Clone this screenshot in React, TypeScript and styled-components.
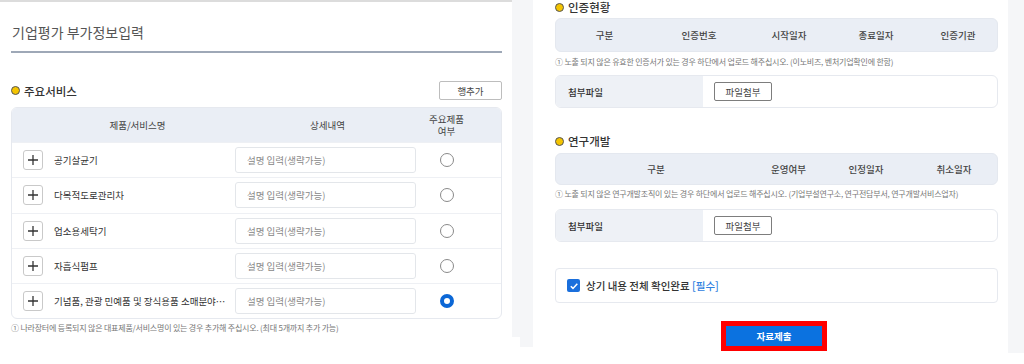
import React from "react";
import styled, { createGlobalStyle } from "styled-components";

const Global = createGlobalStyle`
  html, body { margin: 0; padding: 0; background: #fff; }
  body { font-family: "Noto Sans CJK KR", "Noto Sans", sans-serif; color: #333; }
  * { box-sizing: border-box; }
`;

const Page = styled.div`
  width: 1024px;
  height: 364px;
  display: flex;
  align-items: flex-start;
  background: #fff;
  overflow: hidden;
`;

const LeftShot = styled.div`
  width: 512px;
  border-top: 2px solid #dcdcdc;
  padding: 0 10px 0 11px;
  display: flex;
  flex-direction: column;
`;

const Gutter = styled.div<{ $w: number; $h: number }>`
  width: ${(p) => p.$w}px;
  height: ${(p) => p.$h}px;
  background: #f5f6f8;
  flex-shrink: 0;
`;

const PageTitle = styled.div`
  margin-top: 20px;
  height: 31px;
  font-size: 14px;
  line-height: 20px;
  color: #555;
  border-bottom: 2px solid #9ea8b7;
  padding-left: 1px;
`;

const SectionRow = styled.div`
  margin-top: 28px;
  height: 19px;
  display: flex;
  align-items: center;
  justify-content: space-between;
`;

const SectionTitle = styled.div<{ $mt?: number }>`
  margin-top: ${(p) => p.$mt ?? 0}px;
  display: flex;
  align-items: center;
  gap: 4px;
  font-size: 11.5px;
  font-weight: 500;
  color: #333;
  line-height: 14px;
  height: 14px;
`;

const Bullet = styled.span`
  width: 9px;
  height: 9px;
  border-radius: 50%;
  background: #f4c400;
  border: 1.5px solid #555;
  display: inline-block;
`;

const OutlineButton = styled.button<{ $w: number; $dark?: boolean }>`
  width: ${(p) => p.$w}px;
  height: 19px;
  padding: 0;
  background: #fff;
  border: 1px solid ${(p) => (p.$dark ? "#7d7d7d" : "#bdbdbd")};
  border-radius: 2px;
  font-family: inherit;
  font-size: 9.5px;
  color: #444;
  display: flex;
  align-items: center;
  justify-content: center;
`;

const Table = styled.div`
  margin-top: 7px;
  border: 1px solid #e6e9ef;
  border-radius: 6px;
  overflow: hidden;
`;

const HeadRow = styled.div`
  height: 34px;
  background: #eaeef5;
  display: grid;
  grid-template-columns: 251px 129px 1fr;
  align-items: center;
  font-size: 9.5px;
  color: #444;
  text-align: center;
  line-height: 12px;
`;

const Row = styled.div`
  height: 35.3px;
  border-top: 1px solid #eef0f4;
  display: flex;
  align-items: center;
  padding-left: 11px;
`;

const PlusBtn = styled.span`
  width: 20px;
  height: 20px;
  border: 1px solid #c9c9c9;
  border-radius: 3px;
  display: flex;
  align-items: center;
  justify-content: center;
  flex-shrink: 0;
`;

const Name = styled.span`
  width: 181px;
  margin-left: 11px;
  font-size: 9.5px;
  color: #333;
  white-space: nowrap;
  overflow: hidden;
`;

const FakeInput = styled.div`
  width: 181px;
  height: 26px;
  border: 1px solid #e3e6ea;
  border-radius: 3px;
  padding-left: 11px;
  display: flex;
  align-items: center;
  font-size: 9.5px;
  color: #888;
`;

const RadioCell = styled.div`
  width: 62px;
  display: flex;
  justify-content: center;
`;

const Radio = styled.span<{ $on?: boolean }>`
  width: 14px;
  height: 14px;
  border-radius: 50%;
  border: ${(p) => (p.$on ? "4px solid #0b67d6" : "1.3px solid #8a8a8a")};
  background: #fff;
  display: inline-block;
`;

const Note = styled.div<{ $mt: number }>`
  margin-top: ${(p) => p.$mt}px;
  font-size: 8px;
  line-height: 12px;
  height: 12px;
  color: #777;
  white-space: nowrap;
  letter-spacing: -0.2px;
`;

const RightMain = styled.div`
  width: 475px;
  padding: 0 10px 0 22px;
  display: flex;
  flex-direction: column;
`;

const GridHead = styled.div<{ $cols: string; $mt: number; $h: number }>`
  margin-top: ${(p) => p.$mt}px;
  height: ${(p) => p.$h}px;
  background: #eaeef5;
  border-radius: 6px;
  border: 1px solid #e4e8ef;
  display: grid;
  grid-template-columns: ${(p) => p.$cols};
  align-items: center;
  text-align: center;
  font-size: 9.5px;
  font-weight: 500;
  color: #444;
`;

const AttachBox = styled.div<{ $mt: number }>`
  margin-top: ${(p) => p.$mt}px;
  height: 33px;
  border: 1px solid #e6e9ef;
  border-radius: 6px;
  overflow: hidden;
  display: flex;
`;

const AttachLabel = styled.div`
  width: 147px;
  background: #eef1f6;
  display: flex;
  align-items: center;
  padding-left: 12px;
  font-size: 9.5px;
  font-weight: 500;
  color: #333;
`;

const AttachBody = styled.div`
  flex: 1;
  display: flex;
  align-items: center;
  padding-left: 11px;
`;

const ConfirmBox = styled.div`
  margin-top: 26px;
  height: 35px;
  border: 1px solid #e6e9ef;
  border-radius: 4px;
  display: flex;
  align-items: center;
  padding-left: 11px;
  gap: 6px;
  font-size: 10.5px;
  font-weight: 500;
  color: #333;
`;

const Check = styled.span`
  width: 13px;
  height: 13px;
  border-radius: 2px;
  background: #1a6fdc;
  display: flex;
  align-items: center;
  justify-content: center;
`;

const Required = styled.span`
  color: #2f80e0;
`;

const SubmitWrap = styled.div`
  margin-top: 18px;
  display: flex;
  justify-content: center;
  padding-right: 5px;
`;

const Highlight = styled.div`
  border: 5px solid #ff0000;
`;

const SubmitButton = styled.button`
  width: 96px;
  height: 20px;
  border: none;
  background: #0b72e0;
  color: #fff;
  font-family: inherit;
  font-size: 9.5px;
  font-weight: 700;
  display: block;
  padding: 0;
`;

const PlusIcon = () => (
  <svg width="12" height="12" viewBox="0 0 12 12">
    <path d="M6 1v10M1 6h10" stroke="#333" strokeWidth="1.3" />
  </svg>
);

const rows = [
  { name: "공기살균기", on: false },
  { name: "다목적도로관리차", on: false },
  { name: "업소용세탁기", on: false },
  { name: "자흡식펌프", on: false },
  { name: "기념품, 관광 민예품 및 장식용품 소매분야…", on: true },
];

export default function App() {
  return (
    <Page>
      <Global />
      <LeftShot>
        <PageTitle>기업평가 부가정보입력</PageTitle>
        <SectionRow>
          <SectionTitle>
            <Bullet />
            주요서비스
          </SectionTitle>
          <OutlineButton $w={63}>행추가</OutlineButton>
        </SectionRow>
        <Table>
          <HeadRow>
            <span>제품/서비스명</span>
            <span>상세내역</span>
            <span>
              주요제품
              <br />
              여부
            </span>
          </HeadRow>
          {rows.map((r) => (
            <Row key={r.name}>
              <PlusBtn>
                <PlusIcon />
              </PlusBtn>
              <Name>{r.name}</Name>
              <FakeInput>설명 입력(생략가능)</FakeInput>
              <RadioCell>
                <Radio $on={r.on} />
              </RadioCell>
            </Row>
          ))}
        </Table>
        <Note $mt={3}>
          ① 나라장터에 등록되지 않은 대표제품/서비스명이 있는 경우 추가해 주십시오. (최대 5개까지 추가 가능)
        </Note>
      </LeftShot>
      <Gutter $w={8} $h={337} />
      <Gutter $w={13} $h={347} />
      <RightMain>
        <SectionTitle $mt={0}>
          <Bullet />
          인증현황
        </SectionTitle>
        <GridHead $cols="97px 92px 88px 86px 1fr" $mt={4} $h={34}>
          <span>구분</span>
          <span>인증번호</span>
          <span>시작일자</span>
          <span>종료일자</span>
          <span>인증기관</span>
        </GridHead>
        <Note $mt={4}>
          ① 노출 되지 않은 유효한 인증서가 있는 경우 하단에서 업로드 해주십시오. (이노비즈, 벤처기업확인에 한함)
        </Note>
        <AttachBox $mt={7}>
          <AttachLabel>첨부파일</AttachLabel>
          <AttachBody>
            <OutlineButton $w={58} $dark>
              파일첨부
            </OutlineButton>
          </AttachBody>
        </AttachBox>
        <SectionTitle $mt={26}>
          <Bullet />
          연구개발
        </SectionTitle>
        <GridHead $cols="200px 65px 90px 1fr" $mt={5} $h={32}>
          <span>구분</span>
          <span>운영여부</span>
          <span>인정일자</span>
          <span>취소일자</span>
        </GridHead>
        <Note $mt={3}>
          ① 노출 되지 않은 연구개발조직이 있는 경우 하단에서 업로드 해주십시오. (기업부설연구소, 연구전담부서, 연구개발서비스업자)
        </Note>
        <AttachBox $mt={9}>
          <AttachLabel>첨부파일</AttachLabel>
          <AttachBody>
            <OutlineButton $w={58} $dark>
              파일첨부
            </OutlineButton>
          </AttachBody>
        </AttachBox>
        <ConfirmBox>
          <Check>
            <svg width="10" height="10" viewBox="0 0 10 10">
              <path d="M1.8 5.2l2.2 2.2 4.3-4.6" stroke="#fff" strokeWidth="1.5" fill="none" />
            </svg>
          </Check>
          <span>
            상기 내용 전체 확인완료 <Required>[필수]</Required>
          </span>
        </ConfirmBox>
        <SubmitWrap>
          <Highlight>
            <SubmitButton>자료제출</SubmitButton>
          </Highlight>
        </SubmitWrap>
      </RightMain>
      <Gutter $w={16} $h={353} />
    </Page>
  );
}
